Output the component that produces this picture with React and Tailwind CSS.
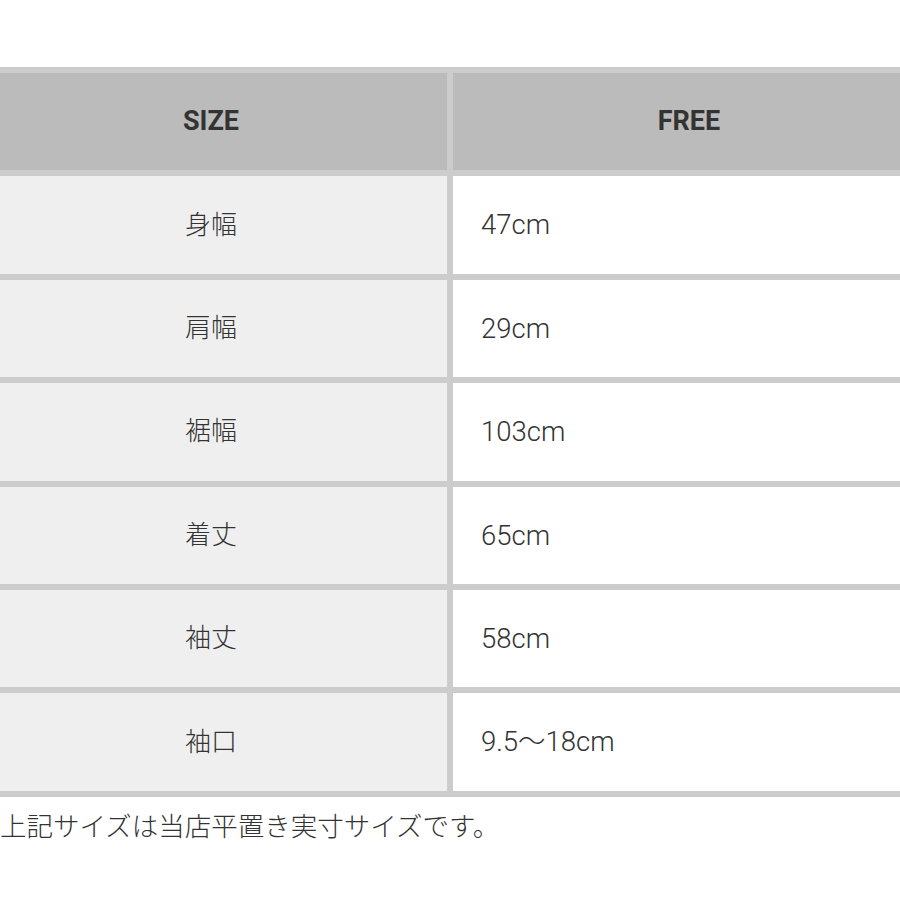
export default function App() {
  const rows = [
    ["身幅", "47cm"],
    ["肩幅", "29cm"],
    ["裾幅", "103cm"],
    ["着丈", "65cm"],
    ["袖丈", "58cm"],
    ["袖口", "9.5〜18cm"],
  ];
  return (
    <div
      className="w-[900px] h-[900px] bg-white overflow-hidden relative"
      style={{ fontFamily: 'Roboto, "Noto Sans CJK JP", sans-serif' }}
    >
      <div className="pt-[67px]">
        <div className="ml-[-31px] w-[962px] bg-[#cccccc] p-[6px] grid grid-cols-[472px_472px] gap-[6px]">
          <div className="h-[97.4px] bg-[#bbbbbb] flex items-center justify-center text-[27px] font-bold text-[#333333]">
            SIZE
          </div>
          <div className="h-[97.4px] bg-[#bbbbbb] flex items-center justify-center text-[27px] font-bold text-[#333333]">
            FREE
          </div>
          {rows.map(([k, v]) => (
            <>
              <div
                key={k + "a"}
                className="h-[97.4px] bg-[#efefef] flex items-center justify-center text-[26px] font-light text-[#333333]"
              >
                {k}
              </div>
              <div
                key={k + "b"}
                className="h-[97.4px] bg-white flex items-center pl-[28px] text-[27.5px] font-light text-[#333333]"
              >
                {v}
              </div>
            </>
          ))}
        </div>
        <div className="mt-[12px] text-[26.5px] leading-[36px] text-[#333333] font-light whitespace-nowrap">
          上記サイズは当店平置き実寸サイズです。
        </div>
      </div>
    </div>
  );
}
